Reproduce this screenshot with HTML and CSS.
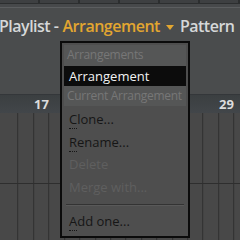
FILE: index.html
```html
<!DOCTYPE html>
<html>
<head>
<meta charset="utf-8">
<link rel="stylesheet" href="styles.css">
</head>
<body>
<div class="app">
  <div class="tabs">
    <div class="tab"></div><div class="tab"></div><div class="tab"></div><div class="tab"></div><div class="tab"></div><div class="tab"></div>
  </div>
  <div class="tabline"></div>
  <div class="header">
    <div class="title">
      <span class="plain">Playlist -</span>
      <span class="arr">Arrangement</span>
      <span class="caret"></span>
      <span class="plain">Pattern</span>
    </div>
  </div>
  <div class="ruler">
    <div class="bar">17</div>
    <div class="bar"></div>
    <div class="bar"></div>
    <div class="bar">29</div>
  </div>
  <div class="grid">
    <div class="track"></div>
    <div class="track"></div>
  </div>

  <div class="menu">
    <div class="menu-head">Arrangements</div>
    <div class="menu-item selected">Arrangement</div>
    <div class="menu-head">Current Arrangement</div>
    <div class="menu-item"><span class="acc">C</span>lone...</div>
    <div class="menu-item"><span class="acc">R</span>ename...</div>
    <div class="menu-item disabled">Delete</div>
    <div class="menu-item disabled">Merge with...</div>
    <div class="sep"></div>
    <div class="menu-item"><span class="acc">A</span>dd one...</div>
  </div>
</div>
</body>
</html>
```

FILE: styles.css
```css
html, body {
  margin: 0;
  padding: 0;
  background: #4a4c4d;
}
.app {
  position: relative;
  width: 240px;
  height: 240px;
  overflow: hidden;
  font-family: "Open Sans", "Noto Sans", sans-serif;
  display: flex;
  flex-direction: column;
}
.tabs {
  display: flex;
  height: 4px;
  background: #3e4042;
  flex-shrink: 0;
}
.tab {
  width: 38px;
  border-right: 2px solid #2c2e2f;
  border-bottom: 1px solid #2c2e2f;
}
.tabline {
  height: 3px;
  border-bottom: 1px solid #5c5e60;
  box-shadow: 0 1px 0 #353738;
  background: #47494b;
  flex-shrink: 0;
}
.header {
  height: 86px;
  flex-shrink: 0;
  background: #4a4c4d;
}
.title {
  display: flex;
  align-items: center;
  gap: 4px;
  margin-left: -1px;
  margin-top: 7px;
  font-size: 16px;
  font-weight: 600;
  letter-spacing: -0.5px;
  white-space: nowrap;
  height: 22px;
}
.plain { color: #d6d8d9; }
.arr { color: #e2a630; }
.caret {
  width: 0;
  height: 0;
  border-left: 4px solid transparent;
  border-right: 4px solid transparent;
  border-top: 5px solid #e2a630;
  margin: 3px 2px 0 2px;
}
.ruler {
  height: 18px;
  flex-shrink: 0;
  display: flex;
  padding-left: 33px;
  background: linear-gradient(#3b3f41, #42464a);
  border-top: 1px solid #34373a;
}
.bar {
  width: 61.68px;
  flex-shrink: 0;
  box-sizing: border-box;
  padding: 2px 0 0 1px;
  color: #dcdcdc;
  font-weight: 700;
  font-size: 13px;
  line-height: 14px;
}
.grid {
  flex: 1;
  display: flex;
  flex-direction: column;
  background-color: #484848;
  background-image: repeating-linear-gradient(90deg, transparent 0, transparent 14.42px, #2f2f2f 14.42px, #2f2f2f 15.42px);
  background-position: 3.2px 0;
}
.track {
  height: 70px;
  border-bottom: 1px solid #2e2e2e;
}

/* Menu overlay */
.menu {
  position: absolute;
  left: 60px;
  top: 41px;
  width: 122px;
  height: 191px;
  border: 2px solid #0b0b0b;
  background: #4e4e4e;
  padding: 2px 2px 0 2px;
  box-sizing: content-box;
  font-size: 12px;
  display: flex;
  flex-direction: column;
}
.menu-head {
  height: 20px;
  line-height: 20px;
  background: #555656;
  color: #777;
  padding-left: 3px;
  letter-spacing: -0.3px;
  white-space: nowrap;
  overflow: hidden;
  flex-shrink: 0;
}
.menu-head:first-child {
  height: 21px;
}
.menu-item {
  height: 22.7px;
  line-height: 22px;
  padding-left: 5px;
  color: #161616;
  font-size: 13px;
  white-space: nowrap;
  flex-shrink: 0;
}
.menu-item.selected {
  height: 20px;
  line-height: 20px;
  background: #0c0c0c;
  color: #f2f2f2;
  font-size: 13px;
}
.menu-head + .menu-item:not(.selected) {
  margin-top: 2px;
}
.menu-item.disabled {
  color: #5f5f5f;
}
.acc {
  border-bottom: 1px dotted #161616;
}
.sep {
  height: 0;
  margin: 5px 2px 4px 2px;
  border-top: 1px solid #333;
  border-bottom: 1px solid #595959;
}
```
